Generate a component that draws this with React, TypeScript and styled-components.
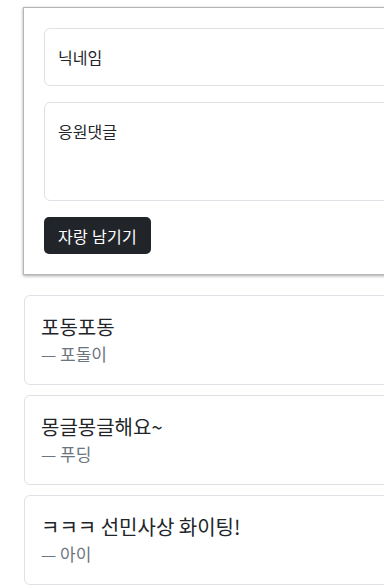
import React, { useState } from "react";
import styled, { createGlobalStyle } from "styled-components";

const GlobalStyle = createGlobalStyle`
  html, body {
    margin: 0;
    padding: 0;
    background: #fff;
    overflow: hidden;
  }
  body {
    font-family: "Noto Sans CJK KR", "Liberation Sans", sans-serif;
    color: #212529;
  }
  * {
    box-sizing: border-box;
  }
`;

const Page = styled.div`
  width: 620px;
  padding: 7px 0 0 23px;
`;

const FormCard = styled.form`
  display: flex;
  flex-direction: column;
  gap: 16px;
  padding: 20px;
  border: 1px solid #b5b5b5;
  box-shadow: 0 1px 3px rgba(0, 0, 0, 0.35);
  background: #fff;
`;

const Field = styled.input`
  height: 58px;
  padding: 0 13px;
  border: 1px solid #dee2e6;
  border-radius: 6px;
  font-family: inherit;
  font-size: 16px;
  color: #212529;
  &::placeholder {
    color: #212529;
  }
`;

const TextArea = styled.textarea`
  height: 99px;
  padding: 16px 13px;
  border: 1px solid #dee2e6;
  border-radius: 6px;
  font-family: inherit;
  font-size: 16px;
  line-height: 24px;
  resize: none;
  &::placeholder {
    color: #212529;
  }
`;

const SubmitBtn = styled.button`
  align-self: flex-start;
  height: 37px;
  padding: 0 14px;
  background: #212529;
  color: #fff;
  border: none;
  border-radius: 5px;
  font-family: inherit;
  font-size: 16px;
  line-height: 24px;
  letter-spacing: 0.3px;
`;

const CommentList = styled.div`
  display: flex;
  flex-direction: column;
  gap: 10px;
  margin-top: 20px;
  padding-left: 1px;
`;

const CommentCard = styled.figure`
  margin: 0;
  height: 90px;
  padding: 16px;
  border: 1px solid #dee2e6;
  border-radius: 6px;
`;

const CommentText = styled.blockquote`
  margin: 0;
  font-size: 20px;
  line-height: 30px;
  color: #212529;
`;

const Author = styled.figcaption`
  font-size: 17px;
  line-height: 24px;
  color: #6c757d;
`;

type Comment = {
  text: string;
  name: string;
};

const comments: Comment[] = [
  { text: "포동포동", name: "포돌이" },
  { text: "몽글몽글해요~", name: "푸딩" },
  { text: "ㅋㅋㅋ 선민사상 화이팅!", name: "아이" },
];

const App: React.FC = () => {
  const [nick, setNick] = useState("");
  const [msg, setMsg] = useState("");

  const handleSubmit = (e: any) => {
    e.preventDefault();
  };

  return (
    <Page>
      <GlobalStyle />
      <FormCard onSubmit={handleSubmit}>
        <Field
          placeholder="닉네임"
          value={nick}
          onChange={(e) => setNick(e.target.value)}
        />
        <TextArea
          placeholder="응원댓글"
          value={msg}
          onChange={(e) => setMsg(e.target.value)}
        />
        <SubmitBtn type="submit">자랑 남기기</SubmitBtn>
      </FormCard>
      <CommentList>
        {comments.map((c, i) => (
          <CommentCard key={i}>
            <CommentText>{c.text}</CommentText>
            <Author>— {c.name}</Author>
          </CommentCard>
        ))}
      </CommentList>
    </Page>
  );
};

export default App;
